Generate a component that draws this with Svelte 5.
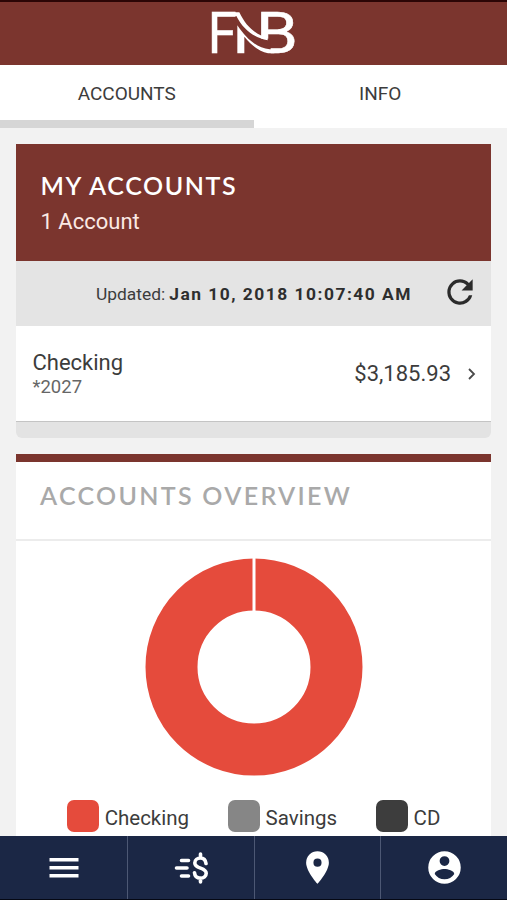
<script lang="ts">
	const accounts = [{ name: 'Checking', number: '*2027', balance: '$3,185.93' }];

	const legend = [
		{ label: 'Checking', kind: 'checking' },
		{ label: 'Savings', kind: 'savings' },
		{ label: 'CD', kind: 'cd' }
	];

	let tab = $state('accounts');
</script>

<div class="app">
	<header>
		<svg class="logo" width="110" height="63" viewBox="0 6 330 189" role="img" aria-label="FNB">
			<g class="letters">
				<text x="23" y="160" textLength="87" lengthAdjust="spacingAndGlyphs">F</text>
				<text x="168" y="160" textLength="126" lengthAdjust="spacingAndGlyphs">B</text>
			</g>
			<!-- ribbons that join the letters -->
			<path class="cut" d="M176 116h36v46h-36z" />
			<path class="ribbon" d="M98 37h20c16 34 38 58 67 70V37h18v84c-41-8-74-33-94-73H98z" />
			<path class="ribbon" d="M112 160V76c26 38 56 68 97 72h14v12h-19c-28-6-50-25-71-50v50z" />
		</svg>
	</header>

	<!-- Tabs -->
	<nav class="tabs">
		<button class:active={tab === 'accounts'} onclick={() => (tab = 'accounts')}>ACCOUNTS</button>
		<button class:active={tab === 'info'} onclick={() => (tab = 'info')}>INFO</button>
	</nav>

	<main>
		<section class="accounts">
			<div class="accounts-head">
				<h1>MY ACCOUNTS</h1>
				<p>1 Account</p>
			</div>
			<div class="updated">
				<span>Updated:</span>
				<strong>Jan 10, 2018 10:07:40 AM</strong>
				<svg class="refresh" width="38" height="38" viewBox="0 0 24 24">
					<path d="M17.650 6.350A7.960 7.960 0 0 0 12 4a8 8 0 1 0 7.730 10h-2.080A6 6 0 1 1 12 6c1.660 0 3.140.69 4.220 1.780L13 11h7V4z" />
				</svg>
			</div>
			{#each accounts as account}
				<div class="account">
					<div class="account-name">
						<span class="name">{account.name}</span>
						<span class="number">{account.number}</span>
					</div>
					<span class="balance">{account.balance}</span>
					<svg class="chevron" width="8" height="12" viewBox="0 0 8 12">
						<path d="M1 1l5 5-5 5" />
					</svg>
				</div>
			{/each}
			<div class="accounts-foot"></div>
		</section>

		<section class="overview">
			<h2>ACCOUNTS OVERVIEW</h2>
			<svg class="donut" width="218" height="218" viewBox="0 0 218 218">
				<circle cx="109" cy="109" r="82.500" />
				<path d="M109 0v54" />
			</svg>
			<div class="legend">
				{#each legend as item}
					<div class="legend-item {item.kind}">
						<i class="swatch"></i>
						<span>{item.label}</span>
					</div>
				{/each}
			</div>
		</section>
	</main>

	<!-- Bottom bar -->
	<nav class="bottom">
		<button aria-label="Menu">
			<svg width="30" height="22" viewBox="0 0 30 22">
				<path d="M.5 1h29v3.500H.5zM.5 9h29v3.500H.5zM.5 17h29v3.500H.5z" />
			</svg>
		</button>
		<button aria-label="Payments">
			<svg class="pay" width="34" height="34" viewBox="0 0 34 34">
				<path d="M7.500 9.500h7M2.500 17h10.500M7.500 25h7M32 12.500C31.500 8.500 29 7 26.500 7c-3 0-5.700 1.900-5.700 4.900 0 6.300 11.400 4.200 11.400 10.400 0 3-2.600 4.900-5.700 4.900-3.200 0-5.700-1.900-6-5.500M26.500 3v4M26.500 27v4" />
			</svg>
		</button>
		<button aria-label="Locations">
			<svg width="39" height="39" viewBox="0 0 24 24">
				<path d="M12 2a7 7 0 0 0-7 7c0 5.250 7 13 7 13s7-7.750 7-13a7 7 0 0 0-7-7zm0 9.500a2.500 2.500 0 1 1 0-5 2.500 2.500 0 0 1 0 5z" />
			</svg>
		</button>
		<button aria-label="Profile">
			<svg width="39" height="39" viewBox="0 0 24 24">
				<path d="M12 2a10 10 0 1 0 0 20 10 10 0 0 0 0-20zm0 3a3 3 0 1 1 0 6 3 3 0 0 1 0-6zm0 14.200a7.200 7.200 0 0 1-6-3.220c.03-1.990 4-3.080 6-3.080s5.970 1.090 6 3.080a7.200 7.200 0 0 1-6 3.220z" />
			</svg>
		</button>
	</nav>
</div>

<style>
	:global(body) {
		background: #f2f2f2;
	}
	.app {
		display: flex;
		flex-direction: column;
		height: 900px;
		box-sizing: border-box;
		overflow: hidden;
		border-top: 2px solid #2b0505;
		border-bottom: 1px solid #050814;
		font-family: Roboto, sans-serif;
		color: #3c3c3c;
	}
	button {
		border: none;
		padding: 0;
		background: none;
		font: inherit;
		color: inherit;
	}
	header {
		flex: none;
		display: flex;
		justify-content: center;
		height: 63px;
		padding-left: 3px;
		background: #7b352e;
	}
	.logo {
		overflow: visible;
	}
	.letters {
		font-size: 173px;
		font-weight: 400;
		fill: #fff;
		stroke: #fff;
		stroke-width: 1.5;
	}
	.cut {
		fill: #7b352e;
	}
	.ribbon {
		fill: #fff;
	}
	.tabs {
		flex: none;
		display: flex;
		height: 63px;
		background: #fff;
	}
	.tabs button {
		flex: 1;
		padding-top: 1px;
		border-bottom: 8px solid transparent;
		font-size: 19px;
	}
	.tabs button.active {
		border-bottom-color: #d6d6d6;
	}
	main {
		flex: 1;
		min-height: 0;
		overflow: hidden;
		padding: 16px 16px 0;
	}
	h1,
	h2 {
		margin: 0;
		font-family: Lato, sans-serif;
		font-size: 25px;
		line-height: 30px;
	}
	.accounts-head {
		height: 117px;
		box-sizing: border-box;
		padding: 26px 24.5px 0;
		background: #7b352e;
		color: #fff;
	}
	h1 {
		font-weight: 600;
		letter-spacing: 1.6px;
	}
	.accounts-head p {
		margin: 9px 0 0;
		font-size: 22px;
		line-height: 26px;
		color: #fbe9e4;
	}
	.updated {
		display: flex;
		align-items: center;
		justify-content: flex-end;
		height: 65px;
		padding-right: 12px;
		background: #e4e4e4;
		font-size: 17.4px;
	}
	.updated strong {
		margin-left: 4px;
		letter-spacing: 1.5px;
		color: #2e2e2e;
	}
	.refresh {
		margin: -4px 0 0 29px;
		fill: #2b2b2b;
	}
	.account {
		display: flex;
		align-items: center;
		height: 95px;
		padding: 0 15px 0 16.5px;
		box-sizing: border-box;
		background: #fff;
	}
	.account-name {
		flex: 1;
		display: flex;
		flex-direction: column;
		padding-top: 1px;
	}
	.name {
		font-size: 22px;
		line-height: 26px;
	}
	.number {
		font-size: 18.5px;
		line-height: 23px;
		color: #666;
	}
	.balance {
		font-size: 22px;
	}
	.chevron {
		margin-left: 17px;
		fill: none;
		stroke: #4a4a4a;
		stroke-width: 1.8;
	}
	.accounts-foot {
		height: 16px;
		border-top: 1px solid #c4c4c4;
		border-radius: 0 0 6px 6px;
		background: #e3e3e3;
	}
	.overview {
		display: flex;
		flex-direction: column;
		margin-top: 16px;
		height: 420px;
		border-top: 8px solid #7b352e;
		background: #fff;
	}
	h2 {
		height: 79px;
		box-sizing: border-box;
		padding: 18px 24px 0;
		border-bottom: 2px solid #ececec;
		font-weight: 600;
		letter-spacing: 2.3px;
		color: #a9a9a9;
	}
	.donut {
		align-self: center;
		margin-top: 17px;
		fill: none;
	}
	.donut circle {
		stroke: #e54b3c;
		stroke-width: 52;
	}
	.donut path {
		stroke: #fff;
		stroke-width: 3;
	}
	.legend {
		display: flex;
		justify-content: center;
		gap: 38.5px;
		margin-top: 24px;
		font-size: 20.5px;
	}
	.legend-item {
		display: flex;
		align-items: center;
		gap: 6px;
		height: 32px;
	}
	.legend-item span {
		padding-top: 4px;
	}
	.swatch {
		width: 32px;
		height: 32px;
		border-radius: 7px;
	}
	.checking .swatch {
		background: #e54b3c;
	}
	.savings .swatch {
		background: #868686;
	}
	.cd .swatch {
		background: #3d3d3d;
	}
	.bottom {
		flex: none;
		display: flex;
		height: 63px;
		padding-left: 1px;
		background: #1b2745;
	}
	.bottom button {
		flex: 1;
		display: flex;
		align-items: center;
		justify-content: center;
	}
	.bottom button + button {
		border-left: 1px solid #4d5874;
	}
	.bottom svg {
		fill: #fff;
	}
	.bottom .pay {
		fill: none;
		stroke: #fff;
		stroke-width: 3.6;
		stroke-linecap: round;
	}
</style>
